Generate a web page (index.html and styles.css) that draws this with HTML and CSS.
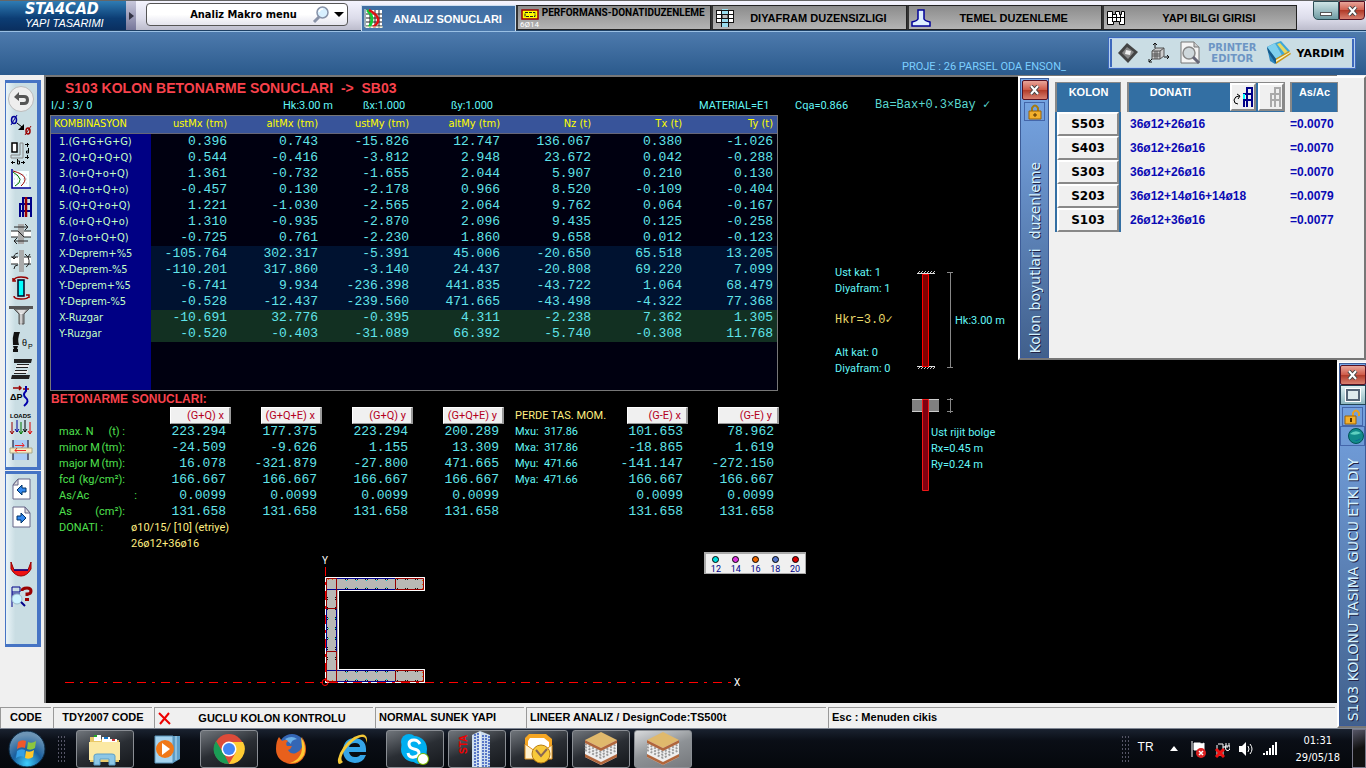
FILE: index.html
```
<!DOCTYPE html>
<html lang="tr">
<head>
    <meta charset="UTF-8">
    <meta name="viewport" content="width=device-width, initial-scale=1.0">
    <title>STA4CAD - Analiz Sonuclari</title>
    <link rel="stylesheet" href="styles.css">
</head>
<body>
<div class="app">
    <header class="topbar">
        <div class="tab-row">
            <div class="brand"><b>STA4CAD</b><span>YAPI TASARIMI</span></div>
            <button class="brand-more" aria-label="Menu"><svg width="5" height="8" viewBox="0 0 5 8"><path d="M0 0l5 4-5 4z" fill="#334"/></svg></button>
            <div class="macro">
                <select aria-label="Makro menu"><option>Analiz Makro menu</option></select>
                <svg width="18" height="18" viewBox="0 0 18 18"><path d="M2 16l5-5" stroke="#8a93a8" stroke-width="3"/><circle cx="10.500" cy="6.500" r="5.500" fill="#d8f0ff" stroke="#8792a8" stroke-width="1.500"/><path d="M7 6a4 4 0 0 1 4-3" stroke="#fff" fill="none" stroke-width="1.500"/></svg>
                <svg width="10" height="6" viewBox="0 0 10 6"><path d="M0 0h10L5 5z"/></svg>
            </div>
            <nav class="tabs">
                <button class="tab active"><svg width="20" height="20" viewBox="0 0 20 20"><path d="M2 1h16v18H2z" fill="#fff"/><path d="M2 5h16M2 9h16M2 13h16M2 17h16M6 1v18M11 1v18M15 1v18" stroke="#222"/><path d="M3 1q9 8 2 17" stroke="#1c3" stroke-width="2.500" fill="none"/><path d="M5 1q16 9 4 17" stroke="#d11" stroke-width="2.500" fill="none"/><path d="M1 0v18h18" stroke="#eec" fill="none"/></svg><span>ANALIZ SONUCLARI</span></button>
                <button class="tab small"><svg width="20" height="20" viewBox="0 0 20 20"><path d="M2 2h16v9H2z" fill="#ff0" stroke="#900" stroke-width="1.500"/><path d="M5 4.500h10v4H5z" fill="none" stroke="#222" stroke-dasharray="3 1"/><text x="0" y="19" font-size="8" font-weight="normal" fill="#fff">6Ø14</text></svg><span>PERFORMANS-DONATIDUZENLEME</span></button>
                <button class="tab"><svg width="20" height="20" viewBox="0 0 20 20"><path d="M1 2h18v12H1z" fill="#fff"/><path d="M7 1h6v18H7z" fill="#9de"/><path d="M1 2.500h18M1 6.500h18M1 10.500h18M1 14.500h18M1.500 2v12M6.500 2v17M13.500 2v17M18.500 2v12" stroke="#111"/><path d="M7 6.500h6v4H7z" fill="#bbb" stroke="#111"/></svg><span>DIYAFRAM DUZENSIZLIGI</span></button>
                <button class="tab"><svg width="20" height="20" viewBox="0 0 20 20"><path d="M7 2h6v9q1 2 6 3v4H1v-4q5-1 6-3z" fill="#dff0ff" stroke="#009" stroke-width="1.500"/></svg><span>TEMEL DUZENLEME</span></button>
                <button class="tab"><svg width="20" height="20" viewBox="0 0 20 20"><path d="M1.500 3.500h5v3h3v-3h4v3h2v-3h3v13h-5v-3h-6v3h-6z" fill="#fff" stroke="#000"/><path d="M1 9.500h17M6.500 6v8M10.500 6v8M14.500 6v8" stroke="#000"/></svg><span>YAPI BILGI GIRISI</span></button>
            </nav>
            <div class="win-buttons">
                <button class="minimize" aria-label="Kucult"><i></i></button>
                <button class="close" aria-label="Kapat"><svg width="11" height="10" viewBox="0 0 11 10"><path d="M2 1l7 8M9 1L2 9" stroke="#444" stroke-width="4"/><path d="M2 1l7 8M9 1L2 9" stroke="#fff" stroke-width="2"/></svg></button>
            </div>
        </div>
        <div class="band">
            <span class="project">PROJE : 26 PARSEL ODA ENSON_</span>
            <div class="tools">
                <button aria-label="3D"><svg width="20" height="20" viewBox="0 0 20 20"><path d="M9 0l11 9-10 11L0 10z" fill="#444"/><path d="M9 4l7 5-6 7-6-6z" fill="#888"/><path d="M8 7l5 1-1 4-5-1z" fill="#eee"/></svg></button>
                <button aria-label="Eksen"><svg width="22" height="22" viewBox="0 0 22 22"><path d="M4 9l4-3h8v8l-4 3H4z" fill="#ccc" stroke="#555"/><path d="M4 9h8v8M12 9l4-3M4 12h8M4 14h8M7 9v8M9 9v8" stroke="#555" fill="none"/><path d="M7 6V1M5 3l2-2 2 2M16 15h5M19 13l2 2-2 2M4 17l-3 3M1 17v3h3" stroke="#111" fill="none"/></svg></button>
                <button class="printer"><svg width="22" height="24" viewBox="0 0 22 24"><path d="M1 1h13l5 5v16H1z" fill="#f4f4f4" stroke="#777"/><path d="M14 1v5h5" fill="#ccc" stroke="#777"/><circle cx="9" cy="12" r="6" fill="#cfd8dc" stroke="#888" stroke-width="1.500"/><path d="M13 16l6 6" stroke="#667" stroke-width="3"/></svg><span>PRINTER<br>EDITOR</span></button>
                <button class="help"><svg width="26" height="26" viewBox="0 0 26 26"><path d="M1 7l8-4 7 12-7 9-5-3z" fill="#2b86bd"/><path d="M1 7l8-4 7 12-6 4z" fill="#7fd0ee"/><path d="M9 3l6-2 9 10-7 6z" fill="#3fa7d8"/><path d="M11 4l3-1 8 9-3 2z" fill="#e8d860"/><path d="M9 19l14-8 2 3-15 10z" fill="#c8981c"/><path d="M10 20l14-8v1l-14 9z" fill="#fff4c8"/><path d="M1 7l9 12v5L2 12z" fill="#165a8a"/></svg><span>YARDIM</span></button>
            </div>
        </div>
    </header>

    <main class="work">
        <aside class="rail">
            <div class="rail-box">
                <button aria-label="Geri"><svg width="26" height="26" viewBox="0 0 26 26"><circle cx="13" cy="13" r="12.500" fill="#eee" stroke="#bbb"/><path d="M11 6l-5 5 5 4v-3h5q2 0 2 2t-2 2h-4v3h4q5 0 5-5t-5-5h-5z" fill="#555"/></svg></button>
                <button aria-label="Cap"><svg width="24" height="24" viewBox="0 0 24 24"><ellipse cx="5" cy="6" rx="2.500" ry="3.500" fill="none" stroke="#009" stroke-width="1.500"/><path d="M2 11L8 1" stroke="#009"/><ellipse cx="19" cy="17" rx="2" ry="3" fill="none" stroke="#900" stroke-width="1.500"/><path d="M16 21l6-9" stroke="#900"/><path d="M8 9l5 4" stroke="#000"/><path d="M15 10v6H9z" fill="#000"/></svg></button>
                <button aria-label="Boyut"><svg width="24" height="24" viewBox="0 0 24 24"><path d="M3 2h5v9H3z" fill="#fff" stroke="#000" stroke-width="1.500"/><path d="M11 2h3v15H2v-3h9z" fill="none" stroke="#888"/><path d="M16 3.500h4M18.500 2v4M16 16.500h4M18.500 14v4M2 21.500h4M3.500 20v3M12 21.500h4M14.500 20v3M8.500 18v5h2v-3h-2M19.500 7v5h-2v-2h2" stroke="#000" fill="none"/></svg></button>
                <button aria-label="Etkilesim"><svg width="24" height="24" viewBox="0 0 24 24"><path d="M4 3h16v17H4z" fill="#f6ffff"/><path d="M5 7h14M5 11h14M5 15h14" stroke="#bcd" stroke-dasharray="1 2" fill="none"/><path d="M4 4q13 8 2 14" stroke="#070" fill="none"/><path d="M4 3q19 5 8 15" stroke="#900" fill="none"/><path d="M3 1v19h19" stroke="#009" stroke-width="1.500" fill="none"/></svg></button>
                <button aria-label="Cerceve"><svg width="24" height="24" viewBox="0 0 24 24"><path d="M11 22V9h10M14 22V3h8v19M11 16h11M14 9h8" stroke="#008" stroke-width="2" fill="none"/><path d="M17 2v20" stroke="#900" stroke-width="2.500"/></svg></button>
                <button aria-label="Kesme"><svg width="24" height="24" viewBox="0 0 24 24"><path d="M2 9h20v6H2z" fill="#fff"/><path d="M9 2h6v20H9z" fill="#aaa"/><path d="M2 9h7M15 9h7M2 15h7M15 15h7M5 5h14M16 2l3 3-3 3M19 19H5M8 16l-3 3 3 3M9 9l6 6" stroke="#222" fill="none"/></svg></button>
                <button aria-label="Moment"><svg width="24" height="24" viewBox="0 0 24 24"><path d="M2 8h20v7H2z" fill="#fff"/><path d="M10 1h5v22h-5z" fill="#aaa"/><path d="M2 8h7M15 8h7M2 15h7M15 15h7M9 4q-5 1-4 6M3 8l2 2 2-2M17 18q5-3 2-10M16 5l3 3 2-3M5 20q0-4 4-4" stroke="#222" fill="none"/></svg></button>
                <button aria-label="Kolon"><svg width="24" height="24" viewBox="0 0 24 24"><path d="M9 4h6v16H9z" fill="#0ff" stroke="#002" stroke-width="1.500"/><path d="M5 4q1-3 7-3t7 2M5 20q0 3 7 3t7-2M7 5H4V2M17 19h3v3" stroke="#900" stroke-width="1.500" fill="none"/></svg></button>
                <button aria-label="Zimba"><svg width="24" height="24" viewBox="0 0 24 24"><path d="M0 3h24v3H0z" fill="#555"/><path d="M5 6h15l-5 5v10h-5V11z" fill="#999" stroke="#555"/><path d="M8 7l9 0-3 4h-3z" fill="#ddd"/><path d="M12 10v12" stroke="#fff"/></svg></button>
                <button aria-label="Donme"><svg width="24" height="24" viewBox="0 0 24 24"><path d="M5 2h6q-3 7-1 13H4Q3 8 5 2zM4 16h5l-1 3h1v3H4v-3h1z" fill="#111"/><text x="13" y="16" font-size="9">θ</text><text x="19" y="19" font-size="7">P</text></svg></button>
                <button aria-label="Yay"><svg width="24" height="24" viewBox="0 0 24 24"><path d="M5 2h18l-1 4H5zM3 18h18l-1 4H2z" fill="#222"/><path d="M8 7h12v3H7v3h12v3H5" fill="#eee"/><path d="M8 7.500h12M7 10.500h12M6 13.500h12M5 16.500h12" stroke="#222"/></svg></button>
                <button aria-label="Deplasman"><svg width="24" height="24" viewBox="0 0 24 24"><path d="M4 4h8M10 2l2 2-2 2M14 5h6" stroke="#900" stroke-width="1.500" fill="none"/><text x="1" y="16" font-size="9" font-weight="bold">ΔP</text><path d="M17 2v5q-4 4 0 7t-2 8" stroke="#00a" stroke-width="2" fill="none"/></svg></button>
                <button aria-label="Yukler"><svg width="24" height="26" viewBox="0 0 24 26"><text x="1" y="7" font-size="6" font-weight="bold">LOADS</text><path d="M3 11v12M1 20l2 3 2-3" stroke="#900" fill="none"/><path d="M8 9v12M6 18l2 3 2-3" stroke="#009" fill="none"/><path d="M12 11v12M10 20l2 3 2-3" stroke="#070" fill="none"/><path d="M16 9v12M14 18l2 3 2-3" stroke="#000" fill="none"/><path d="M21 11v12M19 20l2 3 2-3" stroke="#d00" fill="none"/></svg></button>
                <button aria-label="Birlesim"><svg width="24" height="24" viewBox="0 0 24 24"><path d="M4 2h15v20H4z" fill="#aaccf4"/><path d="M4 2v20M19 2v20" stroke="#002"/><path d="M1 10h22v5H1z" fill="#f8e8c0" stroke="#aa8"/><path d="M6 7.500h9M13 5l2 2.500-2 2M17 12.500H6M8 10l-2 2.500 2 2" stroke="#e22" fill="none"/></svg></button>
            </div>
            <div class="rail-box second">
                <button aria-label="Onceki"><svg width="24" height="24" viewBox="0 0 24 24"><path d="M9 2h12v20H4V8z" fill="#fff" stroke="#668"/><path d="M4 8l5-6v6z" fill="#ddd" stroke="#668"/><path d="M8 13l5-5v3h4v4h-4v3z" fill="#38e" stroke="#036"/></svg></button>
                <button aria-label="Sonraki"><svg width="24" height="24" viewBox="0 0 24 24"><path d="M4 2h12l5 6v14H4z" fill="#fff" stroke="#668"/><path d="M16 2v6h5z" fill="#ddd" stroke="#668"/><path d="M17 13l-5-5v3H8v4h4v3z" fill="#38e" stroke="#036"/></svg></button>
                <button class="after-gap" aria-label="Diyagram"><svg width="24" height="24" viewBox="0 0 24 24"><path d="M2 4l3 8h14l3-8v7q-4 7-10 7T2 11z" fill="#e11" stroke="#900"/><path d="M5 12h14" stroke="#008" stroke-width="1.500"/></svg></button>
                <button aria-label="Yardim"><svg width="24" height="24" viewBox="0 0 24 24"><path d="M3 22V2h8v5H3M3 9h8" stroke="#008" fill="none"/><circle cx="8" cy="14" r="5" fill="#cdf3ff" stroke="#9bc"/><path d="M12 17l4 4" stroke="#008" stroke-width="2"/><path d="M13 6q0-3 5-3 4 0 4 3 0 3-4 3v2M16 14.500h4" stroke="#900" stroke-width="3" fill="none"/></svg></button>
            </div>
        </aside>

        <section class="canvas">
            <h1>S103 KOLON BETONARME SONUCLARI &nbsp;-&gt;&nbsp; SB03</h1>
            <div class="info">
                <span>I/J : 3/ 0</span><span>Hk:3.00 m</span><span>ßx:1.000</span><span>ßy:1.000</span><span>MATERIAL=E1</span><span>Cqa=0.866</span><span class="check">Ba=Bax+0.3×Bay ✓</span>
            </div>
            <div class="results">
                <div class="tables">
                    <div class="combo-box">
                    <table class="combos">
                        <thead>
                            <tr><th>KOMBINASYON</th><th>ustMx (tm)</th><th>altMx (tm)</th><th>ustMy (tm)</th><th>altMy (tm)</th><th>Nz (t)</th><th>Tx (t)</th><th>Ty (t)</th></tr>
                        </thead>
                        <tbody>
                            <tr><th>1.(G+G+G+G)</th><td>0.396</td><td>0.743</td><td>-15.826</td><td>12.747</td><td>136.067</td><td>0.380</td><td>-1.026</td></tr>
                            <tr><th>2.(Q+Q+Q+Q)</th><td>0.544</td><td>-0.416</td><td>-3.812</td><td>2.948</td><td>23.672</td><td>0.042</td><td>-0.288</td></tr>
                            <tr><th>3.(o+Q+o+Q)</th><td>1.361</td><td>-0.732</td><td>-1.655</td><td>2.044</td><td>5.907</td><td>0.210</td><td>0.130</td></tr>
                            <tr><th>4.(Q+o+Q+o)</th><td>-0.457</td><td>0.130</td><td>-2.178</td><td>0.966</td><td>8.520</td><td>-0.109</td><td>-0.404</td></tr>
                            <tr><th>5.(Q+Q+o+Q)</th><td>1.221</td><td>-1.030</td><td>-2.565</td><td>2.064</td><td>9.762</td><td>0.064</td><td>-0.167</td></tr>
                            <tr><th>6.(o+Q+Q+o)</th><td>1.310</td><td>-0.935</td><td>-2.870</td><td>2.096</td><td>9.435</td><td>0.125</td><td>-0.258</td></tr>
                            <tr><th>7.(o+o+Q+Q)</th><td>-0.725</td><td>0.761</td><td>-2.230</td><td>1.860</td><td>9.658</td><td>0.012</td><td>-0.123</td></tr>
                        </tbody>
                        <tbody class="quake">
                            <tr><th>X-Deprem+%5</th><td>-105.764</td><td>302.317</td><td>-5.391</td><td>45.006</td><td>-20.650</td><td>65.518</td><td>13.205</td></tr>
                            <tr><th>X-Deprem-%5</th><td>-110.201</td><td>317.860</td><td>-3.140</td><td>24.437</td><td>-20.808</td><td>69.220</td><td>7.099</td></tr>
                            <tr><th>Y-Deprem+%5</th><td>-6.741</td><td>9.934</td><td>-236.398</td><td>441.835</td><td>-43.722</td><td>1.064</td><td>68.479</td></tr>
                            <tr><th>Y-Deprem-%5</th><td>-0.528</td><td>-12.437</td><td>-239.560</td><td>471.665</td><td>-43.498</td><td>-4.322</td><td>77.368</td></tr>
                        </tbody>
                        <tbody class="wind">
                            <tr><th>X-Ruzgar</th><td>-10.691</td><td>32.776</td><td>-0.395</td><td>4.311</td><td>-2.238</td><td>7.362</td><td>1.305</td></tr>
                            <tr><th>Y-Ruzgar</th><td>-0.520</td><td>-0.403</td><td>-31.089</td><td>66.392</td><td>-5.740</td><td>-0.308</td><td>11.768</td></tr>
                        </tbody>
                    </table>
                    </div>

                    <h2>BETONARME SONUCLARI:</h2>
                    <table class="concrete">
                        <thead>
                            <tr><td></td><th><span>(G+Q) x</span></th><th><span>(G+Q+E) x</span></th><th><span>(G+Q) y</span></th><th><span>(G+Q+E) y</span></th><th class="moment">PERDE TAS. MOM.</th><th><span>(G-E) x</span></th><th><span>(G-E) y</span></th></tr>
                        </thead>
                        <tbody>
                            <tr><th><div>max. N <span>(t) :</span></div></th><td>223.294</td><td>177.375</td><td>223.294</td><td>200.289</td><td class="moment">Mxu: &nbsp;317.86</td><td>101.653</td><td>78.962</td></tr>
                            <tr><th><div>minor M <span>(tm):</span></div></th><td>-24.509</td><td>-9.626</td><td>1.155</td><td>13.309</td><td class="moment">Mxa: &nbsp;317.86</td><td>-18.865</td><td>1.619</td></tr>
                            <tr><th><div>major M <span>(tm):</span></div></th><td>16.078</td><td>-321.879</td><td>-27.800</td><td>471.665</td><td class="moment">Myu: &nbsp;471.66</td><td>-141.147</td><td>-272.150</td></tr>
                            <tr><th><div>fcd <span>(kg/cm²):</span></div></th><td>166.667</td><td>166.667</td><td>166.667</td><td>166.667</td><td class="moment">Mya: &nbsp;471.66</td><td>166.667</td><td>166.667</td></tr>
                            <tr><th><div class="wide">As/Ac <span>:</span></div></th><td>0.0099</td><td>0.0099</td><td>0.0099</td><td>0.0099</td><td></td><td>0.0099</td><td>0.0099</td></tr>
                            <tr><th><div>As <span>(cm²):</span></div></th><td>131.658</td><td>131.658</td><td>131.658</td><td>131.658</td><td></td><td>131.658</td><td>131.658</td></tr>
                        </tbody>
                    </table>
                    <dl class="rebar">
                        <dt>DONATI :</dt>
                        <dd>ø10/15/ [10] (etriye)</dd>
                        <dd>26ø12+36ø16</dd>
                    </dl>
                </div>

                <!-- column elevation and rigid zone -->
                <svg class="elevation" width="200" height="236" viewBox="0 0 200 236">
                    <defs>
                        <pattern id="hatch" width="3" height="3" patternUnits="userSpaceOnUse"><path d="M0 3l3-3" stroke="#ccc"/></pattern>
                    </defs>
                    <g fill="#63f7f7">
                        <text x="5" y="14">Ust kat: 1</text>
                        <text x="5" y="30">Diyafram: 1</text>
                        <text x="5" y="94">Alt kat: 0</text>
                        <text x="5" y="110">Diyafram: 0</text>
                        <text x="125" y="62">Hk:3.00 m</text>
                        <text x="101" y="174">Ust rijit bolge</text>
                        <text x="101" y="190">Rx=0.45 m</text>
                        <text x="101" y="206">Ry=0.24 m</text>
                    </g>
                    <text class="hkr" x="5" y="61" fill="#e8d86a">Hkr=3.0✓</text>
                    <path d="M87 9h18v2H87zM87 105h18v2H87z" fill="url(#hatch)"/>
                    <path d="M87 11.500h18M87 104.500h18" stroke="#ddd"/>
                    <path d="M92.500 12.500h6v92h-6z" fill="#800000" stroke="#f00"/>
                    <path d="M117 10.500h6M117 105.500h6M120.500 10v96M117 137.500h6M117 149.500h6M120.500 136v15" stroke="#888" fill="none"/>
                    <path d="M82 137h27v13H82z" fill="#808080"/>
                    <path d="M82 137.500h27M82 149.500h27" stroke="#ccc"/>
                    <path d="M92.500 137.500h6v91h-6z" fill="#800010" stroke="#f01818"/>
                </svg>
            </div>

            <div class="drawing">
                <!-- C shaped shear wall section with its axes -->
                <svg width="760" height="146" viewBox="60 548 760 146">
                    <path d="M325 577h100v14h-87v78h87v14H325z" fill="#b9b9b5"/>
                    <path d="M325.500 577.500h99v13h-86v79h86v13h-99z" fill="none" stroke="#fff"/>
                    <path d="M326.500 608v44M336.500 608v44M336 578.500h59M326 589.500h69M326 670.500h69M336 681.500h59" stroke="#000090"/>
                    <path d="M326.500 578.500h10v30h-10zM395.500 578.500h28v11h-28zM326.500 651.500h10v30h-10zM395.500 670.500h28v11h-28z" fill="none" stroke="#900"/>
                    <g fill="none" stroke="#111" stroke-dasharray="1 1 1 7">
                        <path d="M345 579.500h78M345 588.500h78M345 671.500h78M345 680.500h78"/>
                        <path d="M327.500 597v67M335.500 597v67"/>
                    </g>
                    <g fill="none" stroke="#0cc" stroke-dasharray="1 9">
                        <path d="M346 580.500h48M346 587.500h48M346 672.500h48M346 679.500h48"/>
                        <path d="M328.500 618v30M335.500 618v30"/>
                    </g>
                    <g fill="none" stroke="#e60" stroke-dasharray="1 3">
                        <path d="M422.500 580v9M422.500 672v9M328 579.500h8M328 680.500h8"/>
                    </g>
                    <path d="M65 682.500h672M325.500 567v116" stroke="#f00" stroke-dasharray="9 6 3 6"/>
                    <circle cx="325" cy="682.500" r="3" fill="none" stroke="#f00"/>
                    <g fill="#fff" font-size="10">
                        <text x="322" y="564">Y</text>
                        <text x="734" y="686">X</text>
                    </g>
                </svg>
                <div class="legend">
                    <span class="d12">12</span><span class="d14">14</span><span class="d16">16</span><span class="d18">18</span><span class="d20">20</span>
                </div>
            </div>
        </section>
    </main>

    <footer class="status">
        <span>CODE</span>
        <span>TDY2007 CODE</span>
        <span class="strong-check"><svg width="13" height="13" viewBox="0 0 13 13"><path d="M1 1l11 11M11 1L2 12" stroke="#e00" stroke-width="2"/></svg><b>GUCLU KOLON KONTROLU</b></span>
        <span class="left">NORMAL SUNEK YAPI</span>
        <span class="left">LINEER ANALIZ / DesignCode:TS500t</span>
        <span class="left">Esc : Menuden cikis</span>
    </footer>

    <div class="taskbar">
        <button class="start" aria-label="Baslat"><svg width="38" height="38" viewBox="0 0 38 38"><defs><radialGradient id="orb" cx="50%" cy="90%" r="80%"><stop offset="0" stop-color="#3fd0ff"/><stop offset=".5" stop-color="#1a5f9e"/><stop offset="1" stop-color="#6d95b5"/></radialGradient></defs><circle cx="19" cy="19" r="18" fill="url(#orb)" stroke="#0b2a44"/><path d="M10 12q4-3 8-1l-1 7q-4-2-8 1z" fill="#f0582a"/><path d="M20 12q4 2 8-1l-1 7q-4 3-8 1z" fill="#8cc63e"/><path d="M9 21q4-3 8-1l-1 7q-4-2-8 1z" fill="#35a0e6"/><path d="M18 21q4 2 8-1l-1 7q-4 3-8 1z" fill="#ffc62a"/></svg></button>
        <i class="grip"></i>
        <div class="apps">
            <button class="open" aria-label="Explorer"><svg width="34" height="34" viewBox="0 0 34 34"><path d="M2 5h10l2 3h17v22H2z" fill="#e9c968"/><path d="M6 3h7v6H6zM14 5h8v5h-8zM22 7h7v5h-7z" fill="#fff"/><path d="M6 3h3v2H6z" fill="#2a2"/><path d="M16 5h4v2h-4z" fill="#17c"/><path d="M24 7h3v2h-3z" fill="#c33"/><path d="M1 10h31v18H1z" fill="#fbe9a4"/><path d="M6 33v-9q0-2 3-2h15q3 0 3 2v9h-6v-6h-9v6z" fill="#8cc7e6" stroke="#5a9fc8"/></svg></button>
            <button aria-label="Media Player"><svg width="32" height="34" viewBox="0 0 32 34"><path d="M22 4h7v23l-7 4z" fill="#5f9fc8"/><path d="M25 4v24" stroke="#bde0f4"/><path d="M4 4h18v27H4z" fill="#a5d3ef" stroke="#5a94b8"/><circle cx="14" cy="17" r="9" fill="#f07818"/><path d="M11 11l8 6-8 6z" fill="#fff"/></svg></button>
            <button class="open" aria-label="Chrome"><svg width="32" height="32" viewBox="0 0 32 32"><circle cx="16" cy="16" r="15" fill="#dd4b39"/><path d="M3 8l9 15 4 8A15 15 0 0 1 3 8z" fill="#1a9d55"/><path d="M16 9h14a15 15 0 0 1-14 22l7-12z" fill="#fc3"/><circle cx="16" cy="16" r="7.500" fill="#fff"/><circle cx="16" cy="16" r="6" fill="#4285f4"/></svg></button>
            <button aria-label="Firefox"><svg width="32" height="34" viewBox="0 0 32 34"><circle cx="17" cy="15" r="13" fill="#3466b5"/><path d="M10 7q7-4 12 0-6 1-6 5z" fill="#6ab0e8"/><path d="M4 5l3 4q4-2 6 0-3 2-1 5h5q-1 3-4 4 3 5 8 3 9-4 6-16 6 9 3 18-5 10-15 9Q1 29 1 17 1 9 4 5z" fill="#e8601c"/><path d="M26 5q6 9 3 18-5 9-14 8 12-4 12-16z" fill="#ffc832"/></svg></button>
            <button aria-label="Internet Explorer"><svg width="34" height="34" viewBox="0 0 34 34"><path d="M30 20H13q1 5 6 5 4 0 5-2h6q-3 8-11 8Q7 30 7 18 8 6 19 6q12 1 11 14zM13 15h11q0-4-5-4t-6 4z" fill="#35a5e8"/><path d="M7 30q-6 5-5-3Q5 14 18 5q12-6 13 2 0 2-1 4 1-7-5-6Q17 7 9 18q-6 9-2 12z" fill="#f5c936"/></svg></button>
            <button class="open" aria-label="Skype"><svg width="34" height="34" viewBox="0 0 34 34"><circle cx="11" cy="10" r="8" fill="#00aff0"/><circle cx="21" cy="24" r="8" fill="#00aff0"/><circle cx="16" cy="17" r="13" fill="#00aff0"/><path d="M22 12q-2-4-6-4-5 0-5 4t5 5 5 4-5 4-6-4" fill="none" stroke="#fff" stroke-width="3"/><circle cx="25" cy="27" r="6" fill="#7fba00"/><circle cx="25" cy="27" r="5" fill="#fff"/></svg></button>
            <button class="open" aria-label="STA4CAD"><svg width="38" height="36" viewBox="0 0 38 36"><text transform="translate(9 23) rotate(-90)" font-size="10" font-weight="bold" fill="#e00">STA</text><path d="M14 4l8-4 10 4v32H14z" fill="#cde"/><path d="M17 3v33M20 2v34M25 4v32M28 4v32M31 5v31" stroke="#35b" stroke-width="1.500" stroke-dasharray="2 1"/><path d="M22 1v35" stroke="#fff"/></svg></button>
            <button class="open" aria-label="Outlook"><svg width="34" height="34" viewBox="0 0 34 34"><path d="M7 2h17l6 5v20H3V6z" fill="#f5a623"/><path d="M8 6h14l5 4v14H6V9z" fill="#fff"/><path d="M3 12l14 10 13-9v14H3z" fill="#fff1cf" stroke="#e0921c"/><circle cx="19" cy="22" r="9" fill="#f8c93a" stroke="#b87d10"/><path d="M14 18l5 6 6-7" stroke="#865" stroke-width="2" fill="none"/></svg></button>
            <button class="open" aria-label="Proje 1"><svg width="34" height="34" viewBox="0 0 34 34"><path d="M1 8v17l16 8 16-8V8z" fill="#eee"/><path d="M17 0l16 8-16 8L1 8z" fill="#e0b96c"/><path d="M1 12l16 8 16-8M1 15l16 8 16-8M1 18l16 8 16-8" stroke="#999" stroke-width="2" stroke-dasharray="2 2" fill="none"/><path d="M1 8l16 8 16-8v3l-16 8-16-8zM1 25l16 8 16-8v-3l-16 8-16-8z" fill="#b0663c"/></svg></button>
            <button class="open current" aria-label="Proje 2"><svg width="34" height="34" viewBox="0 0 34 34"><path d="M1 8v17l16 8 16-8V8z" fill="#eee"/><path d="M17 0l16 8-16 8L1 8z" fill="#e0b96c"/><path d="M1 12l16 8 16-8M1 15l16 8 16-8M1 18l16 8 16-8" stroke="#999" stroke-width="2" stroke-dasharray="2 2" fill="none"/><path d="M1 8l16 8 16-8v3l-16 8-16-8zM1 25l16 8 16-8v-3l-16 8-16-8z" fill="#b0663c"/></svg></button>
        </div>
        <div class="tray">
            <i class="grip"></i>
            <span class="lang">TR</span>
            <svg class="up" width="8" height="5" viewBox="0 0 8 5"><path d="M4 0l4 5H0z" fill="#fff"/></svg>
            <svg width="16" height="18" viewBox="0 0 16 18"><path d="M2 1v16M4 3h6q2 2 4 0v7H4z" fill="#fff" stroke="#fff"/><circle cx="11" cy="13" r="5" fill="#d22"/><path d="M9 11l4 4M13 11l-4 4" stroke="#fff" stroke-width="1.500"/></svg>
            <svg width="16" height="18" viewBox="0 0 16 18"><path d="M4 4h5v11H3V5M9 7h5M12 3v3M15 3v3M11 6h5v3q-2 3-4 1z" stroke="#fff" fill="none"/><path d="M2 9l8 8M10 9l-8 8" stroke="#e11" stroke-width="3"/></svg>
            <svg width="16" height="16" viewBox="0 0 16 16"><path d="M1 5h3l4-4v14l-4-4H1z" fill="#fff"/><path d="M10 5q2 3 0 6M12 3q4 5 0 10" stroke="#fff" fill="none"/></svg>
            <svg width="16" height="16" viewBox="0 0 16 16"><path d="M1 12h2v2H1zM4 10h2v4H4zM7 7h2v7H7zM10 4h2v10h-2zM13 1h2v13h-2z" fill="#fff"/></svg>
            <div class="clock">01:31<br>29/05/18</div>
            <button class="show-desktop" aria-label="Masaustu"></button>
        </div>
    </div>

    <!-- floating windows -->
    <section class="window columns">
        <div class="strip">
            <button class="close" aria-label="Kapat"><svg width="11" height="10" viewBox="0 0 11 10"><path d="M2 1l7 8M9 1L2 9" stroke="#444" stroke-width="4"/><path d="M2 1l7 8M9 1L2 9" stroke="#fff" stroke-width="2"/></svg></button>
            <button class="lock" aria-label="Kilit"><svg width="14" height="16" viewBox="0 0 14 16"><path d="M4 8V4q3-5 6 0v4" stroke="#a67a10" stroke-width="2" fill="none"/><path d="M1 7h12v8H1z" fill="#f3b02c" stroke="#9a6208"/><path d="M7 9v4M5 11h4" stroke="#530"/></svg></button>
            <span class="caption">Kolon boyutlari &nbsp;duzenleme</span>
        </div>
        <table class="members">
            <thead>
                <tr>
                    <th><div class="cap">KOLON</div></th>
                    <th><div class="cap donati"><span>DONATI</span>
                        <button aria-label="Duzenle"><svg width="22" height="22" viewBox="0 0 22 22"><path d="M12 21V8h8M15 21V2h5v19M12 14h8" stroke="#008" stroke-width="2" fill="none"/><path d="M12 8v5" stroke="#0ff" stroke-width="2"/><path d="M7 10q-4 0-5 4 0 4 4 4M5 8l3 2-2 3" stroke="#000" fill="none"/></svg></button>
                        <button aria-label="Pasif"><svg width="22" height="22" viewBox="0 0 22 22"><path d="M11 21V8h9M15 21V2h5v19M11 14h9" stroke="#aaa" stroke-width="2" fill="none"/></svg></button>
                    </div></th>
                    <th><div class="cap">As/Ac</div></th>
                </tr>
            </thead>
            <tbody>
                <tr><td><button>S503</button></td><td>36ø12+26ø16</td><td>=0.0070</td></tr>
                <tr><td><button>S403</button></td><td>36ø12+26ø16</td><td>=0.0070</td></tr>
                <tr><td><button>S303</button></td><td>36ø12+26ø16</td><td>=0.0070</td></tr>
                <tr><td><button>S203</button></td><td>36ø12+14ø16+14ø18</td><td>=0.0079</td></tr>
                <tr><td><button>S103</button></td><td>26ø12+36ø16</td><td>=0.0077</td></tr>
            </tbody>
        </table>
    </section>

    <section class="window diagram">
        <div class="strip">
            <button class="close" aria-label="Kapat"><svg width="11" height="10" viewBox="0 0 11 10"><path d="M2 1l7 8M9 1L2 9" stroke="#444" stroke-width="4"/><path d="M2 1l7 8M9 1L2 9" stroke="#fff" stroke-width="2"/></svg></button>
            <button class="restore" aria-label="Buyut"><i></i></button>
            <button class="lock open-lock" aria-label="Kilit ac"><svg width="18" height="16" viewBox="0 0 18 16"><path d="M9 8V4q3-5 6 0v3" stroke="#e8a020" stroke-width="2" fill="none"/><path d="M1 7h11v8H1z" fill="#f3b02c" stroke="#9a6208"/><path d="M7 9v4" stroke="#530" stroke-width="2"/></svg></button>
            <button class="globe" aria-label="Dunya"><svg width="16" height="16" viewBox="0 0 16 16"><circle cx="8" cy="8" r="7.500" fill="#128a8a" stroke="#055"/><path d="M2 6q5-5 11-1-5 3-11 1z" fill="#5fd0c0"/><path d="M3 11q5 3 10-1-3 5-10 1z" fill="#0a5aa0"/></svg></button>
            <span class="caption">S103 KOLONU TASIMA GUCU ETKI DIY</span>
        </div>
    </section>
</div>
</body>
</html>
```
FILE: styles.css
```
* {
    box-sizing: border-box;
}
body {
    margin: 0;
    font-family: "Liberation Sans", Arial, sans-serif;
    font-size: 11px;
    background: #000;
}
button {
    padding: 0;
    margin: 0;
    border: none;
    background: none;
    font: inherit;
    color: inherit;
    cursor: pointer;
}
svg {
    display: block;
    flex: none;
}
.app {
    position: relative;
    display: flex;
    flex-direction: column;
    min-height: 100vh;
    overflow: hidden;
}

/* top bar */
.tab-row {
    display: flex;
    height: 31px;
    border-top: 1px solid #666;
    border-bottom: 1px solid #1d3f63;
    background: linear-gradient(#f4f4fe, #dcdcea 60%, #bcbccc);
}
.brand {
    width: 126px;
    padding-left: 25px;
    background: linear-gradient(#2f7cb4, #0c3d74 60%, #0a2f60);
    color: #fff;
    font-family: "Noto Sans", sans-serif;
    font-style: italic;
}
.brand b, .brand span {
    display: block;
}
.brand b {
    font: italic bold 16px/16px "DejaVu Sans Condensed", sans-serif;
}
.brand span {
    font: italic 11px/13px "Liberation Sans", sans-serif;
}
.brand-more {
    width: 10px;
    padding-left: 3px;
    background: linear-gradient(#c8c8dc, #77779a);
}
.macro {
    display: flex;
    align-items: center;
    gap: 4px;
    width: 202px;
    margin: 2px 13px 4px 10px;
    padding-right: 3px;
    border: 1px solid #555;
    border-radius: 4px;
    background: linear-gradient(#fff, #fff 50%, #e4e4ee);
}
.macro select {
    flex: 1;
    min-width: 0;
    padding: 0 0 0 32px;
    border: none;
    background: none;
    appearance: none;
    font: bold 11px "DejaVu Sans Condensed", sans-serif;
    text-align-last: center;
}
.tabs {
    display: flex;
    flex: 1;
    min-width: 0;
}
.tab {
    display: flex;
    flex: 195;
    align-items: center;
    min-width: 0;
    margin-top: 4px;
    padding: 0 4px 0 2px;
    border: 1px solid #222;
    border-left: 2px solid #333;
    background: linear-gradient(#8c8c8c, #b4b4b4);
    font-weight: bold;
    font-size: 11px;
    white-space: nowrap;
}
.tab span {
    flex: 1;
    text-align: center;
}
.tab.active {
    flex: 154;
    margin-bottom: -1px;
    border: 1px solid #cde;
    border-bottom: none;
    background: linear-gradient(#3f6ea3, #4a77aa);
    color: #fff;
}
.tab.small {
    font: bold 10px Roboto, sans-serif;
}
.tab.small span {
    align-self: flex-start;
    padding-top: 1px;
}
.win-buttons {
    display: flex;
    margin: 0 1px 10px 16px;
}
.minimize {
    width: 26px;
    border: 1px solid #2c4c54;
    border-radius: 0 0 0 5px;
    background: linear-gradient(#cfe4e6, #6f9ca4);
}
.minimize i {
    display: block;
    width: 12px;
    height: 4px;
    margin: 7px auto 0;
    border: 1px solid #555;
    background: #fff;
}
.close {
    display: flex;
    justify-content: center;
    align-items: center;
    width: 26px;
    border: 1px solid #512;
    border-radius: 0 0 4px 0;
    background: linear-gradient(#e8a59a, #cf5a48 50%, #b03a28 50%, #d88070);
}
.band {
    display: flex;
    justify-content: flex-end;
    height: 44px;
    border-top: 1px solid #9ac0e4;
    background: linear-gradient(#4d7aad, #2b5a8c);
}
.project {
    align-self: flex-end;
    margin-right: 42px;
    color: #7ccfff;
    font: 11px/16px Roboto, sans-serif;
}
.tools {
    display: flex;
    align-items: center;
    gap: 10px;
    width: 248px;
    height: 32px;
    margin: 5px 10px 0 0;
    padding-left: 6px;
    border: solid #3d68bc;
    border-width: 2px 4px;
    outline: 1px solid #b5d0ee;
    outline-offset: -2px;
    background: #cadde4;
}
.tools button {
    display: flex;
    align-items: center;
    gap: 6px;
    font: bold 11px/11px "DejaVu Sans", sans-serif;
}
.tools .printer {
    color: #6d95c4;
    font-size: 10px;
}
.tools .help {
    gap: 4px;
}

/* work area */
.work {
    display: flex;
    flex: 1;
    background: #f0f0f0;
}
.rail {
    width: 44px;
    padding: 5px 3px 0 5px;
}
.rail-box {
    display: flex;
    flex-direction: column;
    align-items: center;
    gap: 3px;
    height: 390px;
    padding-right: 1px;
    border: 1px solid #4674c4;
    border-width: 3px 4px 3px 1px;
    background: linear-gradient(90deg, #eaf4f8, #c9dde3 30%);
}
.rail-box button {
    height: 24px;
}
.rail-box button:first-child {
    margin: 3px 0 1px;
}
.rail-box.second {
    height: 176px;
    margin-top: 1px;
}
.rail-box .after-gap {
    margin-top: 26px;
}
.canvas {
    flex: 1;
    margin: 0 29px 4px 0;
    padding: 3px 0 0 4px;
    border: solid #777;
    border-width: 2px 0 0 2px;
    background: #000;
    color: #63f7f7;
    font-family: Roboto, "Liberation Sans", sans-serif;
}
.canvas h1 {
    margin: 0 0 0 15px;
    color: #f8424c;
    font: bold 14px/16px "Liberation Sans", sans-serif;
}
.info {
    display: grid;
    grid-template-columns: 232px 80px 88px 248px 96px 80px 1fr;
    margin-left: 1px;
    line-height: 19px;
}
.check, .hkr {
    font-family: "Liberation Mono", "DejaVu Sans Mono", monospace;
    font-size: 12px;
}
.check {
    color: #5bd8d0;
}
.results {
    display: grid;
    grid-template-columns: 729px 1fr;
}
table {
    width: 100%;
    border-collapse: collapse;
    table-layout: fixed;
}
th, td {
    padding: 0;
}
.combo-box {
    height: 276px;
    margin-right: 1px;
    border: 1px solid #777;
    background: linear-gradient(90deg, #000084 100px, #000010 100px);
}
.combos th, .combos td, .concrete th, .concrete td {
    height: 16px;
    line-height: 16px;
    white-space: nowrap;
    text-align: right;
    font-weight: normal;
}
.combos td, .concrete td {
    padding-right: 4px;
    color: #60e4ea;
    font-family: "Liberation Mono", monospace;
    font-size: 13px;
}
.concrete td {
    padding-right: 5px;
}
.combos th {
    padding-right: 4px;
    font-family: "DejaVu Sans Condensed", sans-serif;
    font-size: 11px;
}
.combos th:first-child {
    width: 100px;
    padding-left: 8px;
    background: #000084;
    color: #c4ffc4;
    text-align: left;
}
.combos th:nth-child(2) {
    width: 80px;
}
.combos thead th, .combos thead th:first-child {
    height: 17px;
    border-bottom: 1px solid #667;
    background: #38549a;
    color: #ff0;
}
.combos thead th:first-child {
    padding-left: 3px;
}
.quake td {
    background: #001230;
}
.wind td {
    background: #123022;
}
.canvas h2 {
    margin: 0 0 0 1px;
    color: #f8424c;
    font: bold 12px/16px "Liberation Sans", sans-serif;
}
.concrete thead td {
    width: 90px;
}
.concrete thead th span {
    display: inline-block;
    width: 61px;
    padding-right: 5px;
    border: solid #fff;
    border-width: 1px 0 0 1px;
    border-right: 2px solid #999;
    border-bottom: 1px solid #999;
    background: #f0f0f0;
    color: #b4001e;
    line-height: 15px;
    vertical-align: top;
}
.concrete thead .moment {
    width: 109px;
    color: #ffee80;
}
.concrete .moment {
    padding: 0 0 0 11px;
    color: #63f7f7;
    font-family: inherit;
    font-size: 11px;
    text-align: left;
}
.concrete thead th:nth-child(7) {
    width: 75px;
}
.concrete tbody th div {
    display: flex;
    justify-content: space-between;
    width: 76px;
    padding: 0 1px 0 9px;
    color: #4fe04f;
}
.concrete tbody th .wide {
    width: 88px;
}
.rebar {
    display: grid;
    grid-template-columns: 72px 1fr;
    margin: 0 0 0 9px;
    line-height: 16px;
}
.rebar dt {
    color: #4fe04f;
}
.rebar dd {
    grid-column: 2;
    margin: 0;
    color: #ffee80;
}
.elevation {
    margin: 147px 0 0 51px;
    font-size: 11px;
}
.drawing {
    display: grid;
    margin: -4px 0 0 10px;
}
.drawing > * {
    grid-area: 1 / 1;
}
.legend {
    display: flex;
    justify-content: space-around;
    width: 102px;
    height: 22px;
    margin: 4px 0 0 644px;
    border: solid #aaa;
    border-width: 2px 1px 1px 2px;
    background: #f0f0f0;
    color: #000084;
    font-size: 9px;
    line-height: 10px;
}
.legend span::before {
    content: "";
    display: block;
    width: 5px;
    height: 5px;
    margin: 2px auto 1px;
    border: 1px solid #000;
    border-radius: 50%;
    background: var(--dot);
}
.d12 { --dot: #0dd; }
.d14 { --dot: #d3d; }
.d16 { --dot: #e60; }
.d18 { --dot: #57c; }
.d20 { --dot: #d00; }

/* status bar */
.status {
    display: grid;
    grid-template-columns: 51px 99px 219px 149px 300px 1fr;
    gap: 2px;
    height: 21px;
    padding-right: 31px;
    background: #f0f0f0;
    font-weight: bold;
}
.status span {
    overflow: hidden;
    border: solid #999;
    border-width: 1px 0 0 1px;
    line-height: 19px;
    text-align: center;
    white-space: nowrap;
}
.status .left {
    padding-left: 3px;
    text-align: left;
}
.status .strong-check {
    display: flex;
    align-items: center;
    padding-left: 3px;
}
.strong-check b {
    flex: 1;
}

/* task bar */
.taskbar {
    display: flex;
    align-items: center;
    height: 40px;
    border-top: 1px solid #7f8794;
    background: linear-gradient(#1a2230, #0a0e16 30%, #05080c);
}
.start {
    margin-left: 8px;
}
.grip {
    width: 8px;
    height: 28px;
    background: radial-gradient(#556 1px, transparent 1px) 0 0 / 3px 4px;
}
.start + .grip {
    margin: 0 11px;
}
.apps {
    display: flex;
    gap: 4px;
}
.apps button {
    display: flex;
    justify-content: center;
    align-items: center;
    width: 58px;
    height: 38px;
}
.apps .open {
    border: 1px solid #8a8e94;
    border-radius: 3px;
    background: linear-gradient(160deg, #70757b, #2a2e34 50%, #15181c);
}
.apps .current {
    background: linear-gradient(160deg, #d8dadc, #8e9296 50%, #76797d);
}
.tray {
    display: flex;
    align-items: center;
    gap: 8px;
    margin-left: auto;
    color: #fff;
    font-size: 12px;
}
.lang {
    margin: -4px 8px 0 1px;
}
.up {
    margin-right: 4px;
}
.clock {
    margin: 0 4px 0 10px;
    font-family: "DejaVu Sans Condensed", sans-serif;
    font-size: 11px;
    line-height: 17px;
    text-align: center;
}
.show-desktop {
    width: 14px;
    height: 39px;
    border: 1px solid #778;
    background: linear-gradient(160deg, #556, #111 50%);
}

/* floating windows */
.window {
    position: absolute;
    right: 0;
    display: flex;
    border: 2px solid #fff;
    border-bottom-color: #777;
    background: #f0f0f0;
}
.strip {
    display: flex;
    flex-direction: column;
    align-items: center;
    width: 29px;
    padding-top: 1px;
    border: 1px solid #3c5c98;
    background: linear-gradient(#78a8e8, #6b95cf 30%, #41608c);
}
.strip .close {
    height: 20px;
    border-radius: 2px;
}
.lock {
    display: flex;
    justify-content: center;
    align-items: center;
    width: 21px;
    height: 19px;
    margin-top: 2px;
    border: 1px solid #46a;
}
.caption {
    margin-top: auto;
    padding-top: 4px;
    color: #d8f4ff;
    font: 14px/26px "DejaVu Sans", sans-serif;
    text-shadow: -1px 1px 0 #224;
    white-space: nowrap;
    writing-mode: vertical-rl;
    transform: rotate(180deg);
}
.columns {
    top: 76px;
    width: 348px;
    height: 284px;
    border-right: 2px solid #777;
}
.columns .strip {
    margin-right: 6px;
}
.members {
    align-self: flex-start;
    width: 284px;
    margin-top: 4px;
}
.members th:nth-child(1) {
    width: 72px;
}
.members th:nth-child(2) {
    width: 163px;
}
.cap {
    width: 66px;
    height: 30px;
    padding-top: 1px;
    border: solid #888;
    border-width: 1px 1px 0 2px;
    background: #336fa3;
    color: #fff;
    font-size: 11px;
    line-height: 16px;
}
.members th:nth-child(3) .cap {
    width: 48px;
}
.cap.donati {
    display: flex;
    width: 158px;
    gap: 2px;
    padding: 0;
}
.donati span {
    flex: 1;
    padding: 1px 16px 0 0;
}
.donati button, .members td button {
    border: 2px solid #fff;
    border-right-color: #888;
    border-bottom-color: #888;
    background: #f0f0f0;
}
.donati button {
    width: 26px;
    height: 28px;
}
.members td {
    height: 24px;
    color: #0a0ab4;
    font-size: 12px;
    font-weight: bold;
}
.members td:nth-child(2) {
    padding-left: 3px;
}
.members td:nth-child(3) {
    padding-right: 6px;
    text-align: right;
}
.members td button {
    display: block;
    width: 62px;
    height: 24px;
    margin-left: 2px;
    box-shadow: 2px 0 #336fa3, -2px 0 #336fa3;
    color: #000;
    font: bold 12px "DejaVu Sans", sans-serif;
}
.diagram {
    top: 362px;
    bottom: 40px;
    width: 29px;
    border-width: 1px 0 2px 2px;
}
.diagram .strip {
    width: 27px;
}
.restore {
    width: 26px;
    height: 20px;
    border: 1px solid #245;
    background: linear-gradient(#dff0f2, #8fb8c0);
}
.restore i {
    display: block;
    width: 14px;
    height: 12px;
    margin: 2px auto;
    border: 2px solid #567;
    outline: 1px solid #fff;
    background: #dfecee;
}
.globe {
    display: flex;
    justify-content: flex-end;
    align-items: center;
    width: 25px;
    height: 20px;
    border: 1px solid #46a;
}
```
